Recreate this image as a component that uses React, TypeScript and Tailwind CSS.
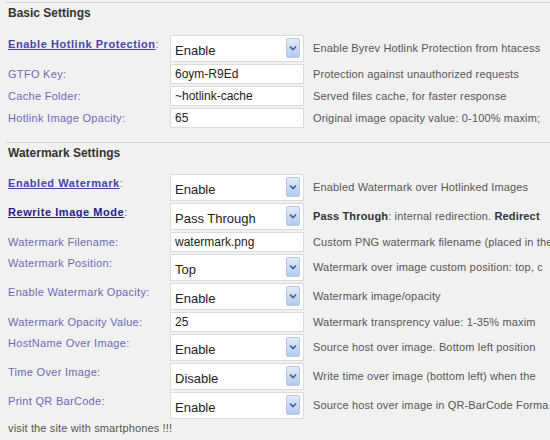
import React from "react";

type Row = {
  label: string;
  kind: "select" | "input";
  value: string;
  desc: React.ReactNode;
  link?: "light" | "dark";
};

const basic: Row[] = [
  {
    label: "Enable Hotlink Protection",
    kind: "select",
    value: "Enable",
    desc: "Enable Byrev Hotlink Protection from htacess",
    link: "light",
  },
  { label: "GTFO Key", kind: "input", value: "6oym-R9Ed", desc: "Protection against unauthorized requests" },
  { label: "Cache Folder", kind: "input", value: "~hotlink-cache", desc: "Served files cache, for faster response" },
  {
    label: "Hotlink Image Opacity",
    kind: "input",
    value: "65",
    desc: "Original image opacity value: 0-100% maxim;",
  },
];

const watermark: Row[] = [
  {
    label: "Enabled Watermark",
    kind: "select",
    value: "Enable",
    desc: "Enabled Watermark over Hotlinked Images",
    link: "light",
  },
  {
    label: "Rewrite Image Mode",
    kind: "select",
    value: "Pass Through",
    desc: (
      <>
        <b className="text-[#333]">Pass Through</b>: internal redirection. <b className="text-[#333]">Redirect</b>
      </>
    ),
    link: "dark",
  },
  {
    label: "Watermark Filename",
    kind: "input",
    value: "watermark.png",
    desc: "Custom PNG watermark filename (placed in the",
  },
  {
    label: "Watermark Position",
    kind: "select",
    value: "Top",
    desc: "Watermark over image custom position: top, c",
  },
  { label: "Enable Watermark Opacity", kind: "select", value: "Enable", desc: "Watermark image/opacity" },
  { label: "Watermark Opacity Value", kind: "input", value: "25", desc: "Watermark transprency value: 1-35% maxim" },
  { label: "HostName Over Image", kind: "select", value: "Enable", desc: "Source host over image. Bottom left position" },
  {
    label: "Time Over Image",
    kind: "select",
    value: "Disable",
    desc: "Write time over image (bottom left) when the",
  },
  {
    label: "Print QR BarCode",
    kind: "select",
    value: "Enable",
    desc: "Source host over image in QR-BarCode Forma",
  },
];

function FakeSelect({ value }: { value: string }) {
  return (
    <div className="relative h-[27px] w-[134px] border border-[#dcdcdc] bg-white">
      <span className="absolute left-[4px] top-[7px] text-[13px] leading-[16px] text-[#222]">{value}</span>
      <div className="absolute right-[3px] top-[2px] flex h-[20px] w-[14px] items-center justify-center rounded-[2px] border border-[#b6c8e6] bg-gradient-to-b from-[#e2ebf9] to-[#b4caee]">
        <svg width="8" height="6" viewBox="0 0 8 6">
          <path d="M1 1.5 L4 4.5 L7 1.5" fill="none" stroke="#3d5d9c" strokeWidth="1.6" />
        </svg>
      </div>
    </div>
  );
}

function FakeInput({ value }: { value: string }) {
  return (
    <div className="flex h-[20px] w-[134px] items-center border border-[#dcdcdc] bg-white px-[4px] text-[12px] text-[#222]">
      {value}
    </div>
  );
}

function SettingRow({ row }: { row: Row }) {
  const isSelect = row.kind === "select";
  return (
    <div className={`grid grid-cols-[162px_134px_1fr] items-start ${isSelect ? "h-[29px]" : "h-[22px]"}`}>
      <div className={`whitespace-nowrap leading-[14px] tracking-[0.3px] ${isSelect ? "pt-[2px]" : "pt-[3px]"}`}>
        {row.link ? (
          <>
            <span
              className={`font-bold underline tracking-[0.55px] ${row.link === "dark" ? "text-[#1e1e8e]" : "text-[#4646a6]"}`}
            >
              {row.label}
            </span>
            <span className="text-[#6a6ab4]">:</span>
          </>
        ) : (
          <span className="text-[#6a6ab4]">{row.label}:</span>
        )}
      </div>
      {isSelect ? <FakeSelect value={row.value} /> : <FakeInput value={row.value} />}
      <div
        className={`overflow-hidden whitespace-nowrap pl-[9px] tracking-[0.15px] text-[#555] ${isSelect ? "pt-[6px]" : "pt-[3px]"} leading-[14px]`}
      >
        {row.desc}
      </div>
    </div>
  );
}

function Section({ title, rows, first }: { title: string; rows: Row[]; first?: boolean }) {
  return (
    <div className="ml-[6px] border-t border-[#d2d2d2]">
      <div className="pl-[2px] pt-[2px] text-[12px] font-bold leading-[16px] text-[#333]">{title}</div>
      <div className={`flex flex-col pl-[2px] ${first ? "pt-[14px]" : "pt-[13px]"}`}>
        {rows.map((r) => (
          <SettingRow key={r.label} row={r} />
        ))}
      </div>
    </div>
  );
}

export default function App() {
  return (
    <div
      className="h-[440px] w-[550px] overflow-hidden bg-[#f1f1f1] pt-[2px] text-[11px]"
      style={{ fontFamily: '"Liberation Sans", Arial, sans-serif' }}
    >
      <Section title="Basic Settings" rows={basic} first />
      <div className="h-[12px]" />
      <Section title="Watermark Settings" rows={watermark} />
      <div className="pl-[8px] leading-[14px] tracking-[0.15px] text-[#555]">
        visit the site with smartphones !!!
      </div>
    </div>
  );
}
